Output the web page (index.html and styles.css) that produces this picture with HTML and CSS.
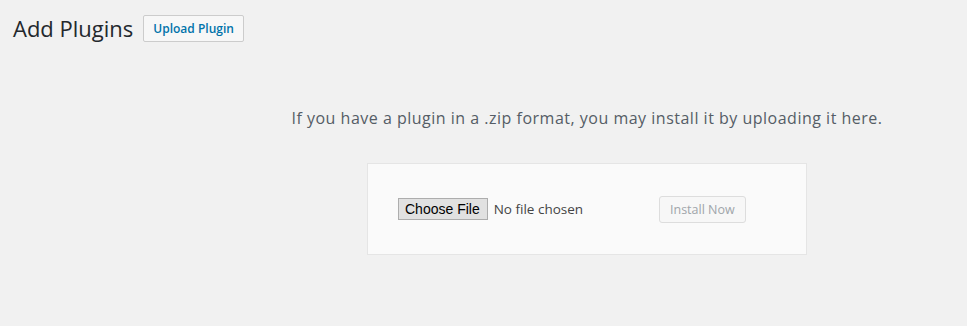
FILE: index.html
```html
<!DOCTYPE html>
<html lang="en">
<head>
    <meta charset="UTF-8">
    <title>Add Plugins</title>
    <link rel="stylesheet" href="styles.css">
</head>
<body>
    <div class="wrap">
        <div class="page-head">
            <h1 class="page-title">Add Plugins</h1>
            <a class="title-action" href="#">Upload Plugin</a>
        </div>

        <div class="upload-plugin">
            <p class="install-help">If you have a plugin in a .zip format, you may install it by uploading it here.</p>
            <form class="upload-form">
                <input type="file" class="file-input" name="pluginzip">
                <button type="submit" class="install-button" disabled>Install Now</button>
            </form>
        </div>
    </div>
</body>
</html>
```

FILE: styles.css
```css
* {
    box-sizing: border-box;
}

body {
    margin: 0;
    background: #f1f1f1;
    color: #444;
    font-family: "Open Sans", "Noto Sans", sans-serif;
    font-size: 13px;
}

.wrap {
    padding: 15px 0 0 13px;
}

.page-head {
    display: flex;
    align-items: center;
    gap: 10px;
    height: 27px;
}

.page-title {
    margin: 0;
    font-size: 22px;
    font-weight: 400;
    color: #23282d;
    line-height: 27px;
}

.title-action {
    display: inline-block;
    height: 27px;
    line-height: 25px;
    padding: 0 9px;
    border: 1px solid #ccc;
    border-radius: 2px;
    background: #f7f7f7;
    color: #0073aa;
    font-size: 12px;
    font-weight: 600;
    text-decoration: none;
}

.upload-plugin {
    margin-left: 194px;
    display: flex;
    flex-direction: column;
    align-items: center;
}

.install-help {
    margin: 64px 0 0;
    font-size: 16px;
    line-height: 24px;
    letter-spacing: 0.5px;
    color: #555d66;
}

.upload-form {
    display: flex;
    align-items: center;
    width: 440px;
    height: 92px;
    margin-top: 33px;
    padding: 0 31px 0 30px;
    background: #fafafa;
    border: 1px solid #e5e5e5;
}

.file-input {
    width: 261px;
    font-family: "Open Sans", "Noto Sans", sans-serif;
    font-size: 13.5px;
    color: #444;
}

.file-input::file-selector-button {
    height: 22px;
    margin-right: 6px;
    padding: 0 7px 0 6px;
    font-family: "Liberation Sans", Arial, sans-serif;
    font-size: 14px;
    color: #000;
    background: #e1e1e1;
    border: 1px solid #adadad;
    border-radius: 0;
}

.install-button {
    height: 27px;
    padding: 0 10px;
    font-family: "Open Sans", "Noto Sans", sans-serif;
    font-size: 12.5px;
    color: #a0a5aa;
    background: #f7f7f7;
    border: 1px solid #ddd;
    border-radius: 3px;
}
```
